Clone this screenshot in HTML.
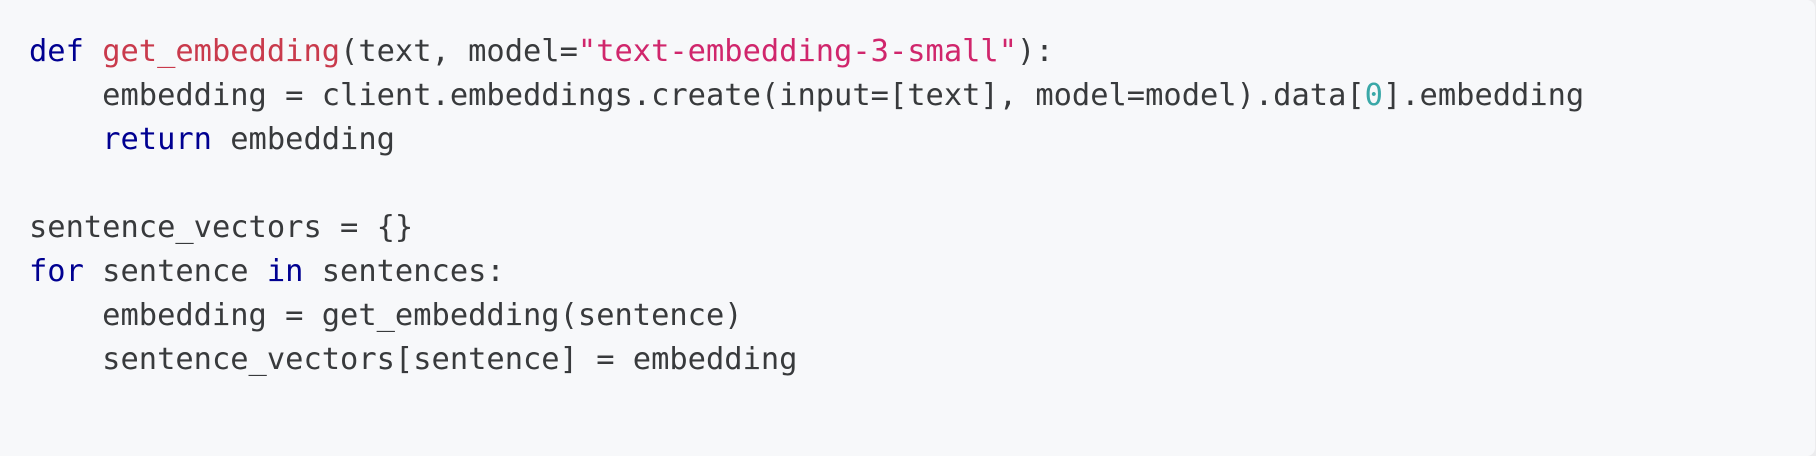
<!DOCTYPE html>
<html><head><style>
html,body{margin:0;padding:0;width:1816px;height:456px;background:#ececee;overflow:hidden}
.box{position:absolute;left:0;top:0;width:1815px;height:456px;background:#f7f8fa;border-radius:0 8px 8px 0}
pre{margin:0;position:absolute;left:29px;top:30px;font-family:"DejaVu Sans Mono","Liberation Mono",monospace;font-size:30.4px;line-height:44px;color:#383a3c}
.k{color:#000091}.f{color:#c93a4c}.s{color:#d0266c}.n{color:#3aa8a8}
</style></head><body><div class="box"><pre><span class="k">def</span> <span class="f">get_embedding</span>(text, model=<span class="s">"text-embedding-3-small"</span>):
    embedding = client.embeddings.create(input=[text], model=model).data[<span class="n">0</span>].embedding
    <span class="k">return</span> embedding

sentence_vectors = {}
<span class="k">for</span> sentence <span class="k">in</span> sentences:
    embedding = get_embedding(sentence)
    sentence_vectors[sentence] = embedding</pre></div></body></html>
